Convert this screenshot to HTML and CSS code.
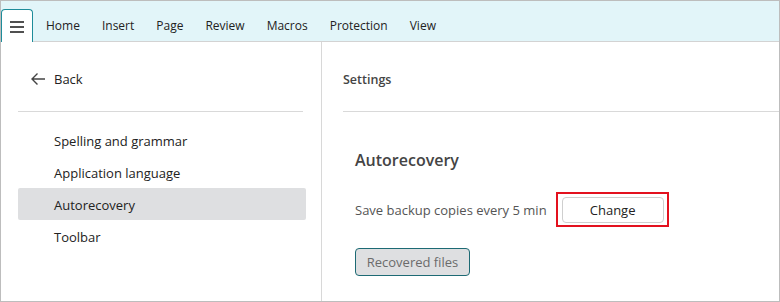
FILE: index.html
```html
<!DOCTYPE html>
<html>
<head>
<meta charset="utf-8">
<link rel="stylesheet" href="styles.css">
</head>
<body>
<div class="app">
  <div class="topbar">
    <div class="menu-btn">
      <svg width="16" height="14" viewBox="0 0 16 14"><path d="M1 2h14M1 7h14M1 12h14" stroke="#505050" stroke-width="2"/></svg>
    </div>
    <nav class="tabs">
      <span class="tab">Home</span>
      <span class="tab">Insert</span>
      <span class="tab">Page</span>
      <span class="tab">Review</span>
      <span class="tab">Macros</span>
      <span class="tab">Protection</span>
      <span class="tab">View</span>
    </nav>
  </div>
  <div class="main">
    <aside class="side">
      <div class="back">
        <svg class="back-icon" width="16" height="14" viewBox="0 0 16 14"><path d="M15 7H2M7.5 1.5L2 7l5.5 5.5" fill="none" stroke="#444" stroke-width="1.4"/></svg>
        <span>Back</span>
      </div>
      <div class="side-sep"></div>
      <ul class="list">
        <li class="item">Spelling and grammar</li>
        <li class="item">Application language</li>
        <li class="item active">Autorecovery</li>
        <li class="item">Toolbar</li>
      </ul>
    </aside>
    <section class="content">
      <div class="content-head">Settings</div>
      <div class="content-sep"></div>
      <div class="body">
        <h2 class="title">Autorecovery</h2>
        <div class="row">
          <span class="label">Save backup copies every 5 min</span>
          <span class="highlight"><button class="btn">Change</button></span>
        </div>
        <button class="btn-recovered">Recovered files</button>
      </div>
    </section>
  </div>
</div>
</body>
</html>
```
FILE: styles.css
```css
* { box-sizing: border-box; }
html, body { margin: 0; padding: 0; background: #fff; }
body { font-family: "Open Sans", "Noto Sans", sans-serif; color: #222; }
.app {
  width: 780px; height: 302px;
  border: 1px solid #bdbdbd;
  display: flex; flex-direction: column;
  overflow: hidden;
}
.topbar {
  height: 41px; flex: none;
  background: #e2f5f9;
  border-bottom: 1px solid #d3d3d3;
  display: flex; align-items: flex-end;
}
.menu-btn {
  width: 32px; height: 33px;
  margin-bottom: -1px;
  background: #fff;
  border: 1px solid #1e8c9a; border-bottom: none;
  border-radius: 4px 4px 0 0;
  display: flex; align-items: center; justify-content: center;
  padding-top: 1px;
}
.tabs { display: flex; height: 40px; align-items: center; margin-left: 2px; padding-top: 8px; }
.tab { font-size: 12px; color: #222; padding: 0 11px; }
.main { flex: 1; display: flex; min-height: 0; }
.side {
  width: 321px; flex: none;
  border-right: 1px solid #d8d8d8;
  padding: 0 15px 0 17px;
}
.back {
  height: 69px; display: flex; align-items: center;
  padding-left: 12px; font-size: 13px; gap: 8px;
  padding-top: 5px;
}
.side-sep { height: 1px; background: #d9d9d9; margin-right: 3px; }
.list { list-style: none; margin: 12px 0 0; padding: 0; }
.item {
  height: 32px; display: flex; align-items: center;
  padding-left: 36px; font-size: 13px; border-radius: 2px;
  padding-top: 1px;
}
.item.active { background: #dedfe1; }
.content { flex: 1; display: flex; flex-direction: column; }
.content-head {
  height: 69px; display: flex; align-items: center;
  padding-left: 21px; font-size: 12.5px; font-weight: 600; color: #444;
  padding-top: 5px;
}
.content-sep { height: 1px; background: #d9d9d9; margin-left: 21px; }
.body { padding: 37px 0 0 33px; }
.title { margin: 0; font-size: 16px; font-weight: 600; color: #444; line-height: 22px; }
.row { display: flex; align-items: center; margin-top: 21px; gap: 9px; }
.label { font-size: 13px; color: #555; }
.highlight { border: 2px solid #e3111e; padding: 3px 3px 2px 4px; display: flex; }
.btn {
  width: 102px; height: 26px;
  font: inherit; font-size: 13px; color: #222;
  background: #fff; border: 1px solid #cfcfcf; border-radius: 4px;
}
.btn-recovered {
  display: block; margin-top: 21px;
  width: 115px; height: 28px;
  font: inherit; font-size: 13px; color: #6b6b6b;
  background: #dedfe1; border: 1px solid #1d6a74; border-radius: 4px;
}
```
